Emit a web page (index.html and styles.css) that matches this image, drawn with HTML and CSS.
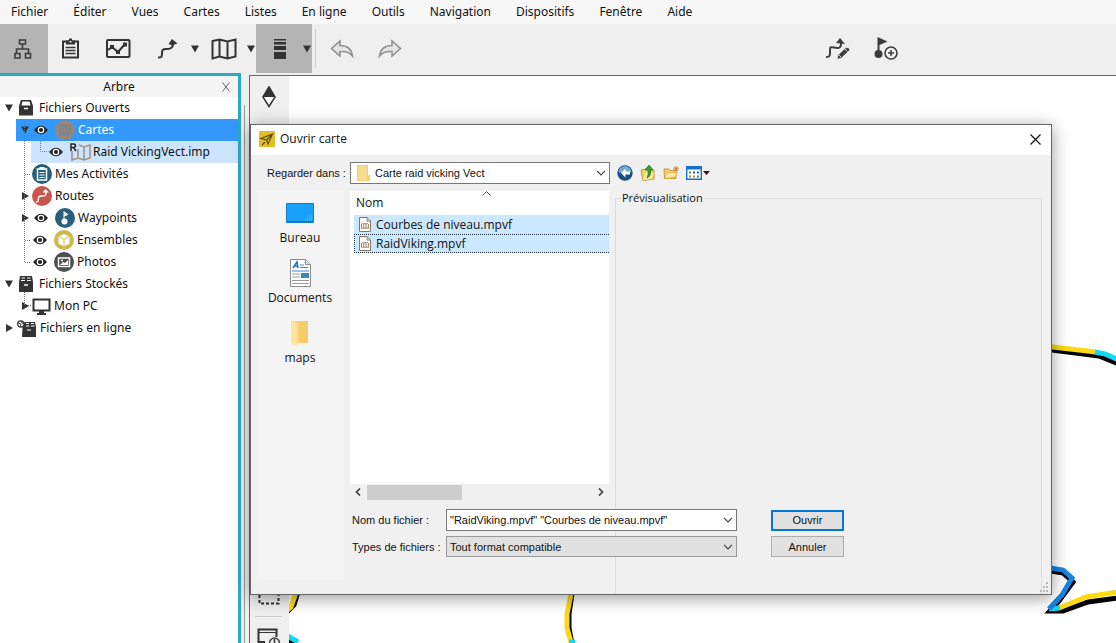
FILE: index.html
```html
<!DOCTYPE html>
<html lang="fr">
<head>
<meta charset="utf-8">
<title>Ouvrir carte</title>
<link rel="stylesheet" href="styles.css">
</head>
<body>
<svg class="defs" aria-hidden="true">
  <symbol id="eye" viewBox="0 0 14 10"><path d="M0 5Q7-3.500 14 5Q7 13.500 0 5Z" fill="#222"/><circle cx="7" cy="5" r="3.300" fill="#fff"/><circle cx="7" cy="5" r="2.100" fill="#222"/></symbol>
  <symbol id="chev" viewBox="0 0 10 6"><path d="M1 .8l4 4 4-4" fill="none" stroke="#444" stroke-width="1.200"/></symbol>
  <symbol id="down" viewBox="0 0 8 8"><path d="M0 .5h8L4 7.500z" fill="#333"/></symbol>
  <symbol id="right" viewBox="0 0 8 8"><path d="M1 0v8l7-4z" fill="#333"/></symbol>
  <symbol id="map" viewBox="0 0 26 22"><path d="M1.500 3l7-1.500 8 2 8-2v17l-8 2-8-2-7 2zM8.500 1.500v17M16.500 3.500v17" fill="none" stroke="currentColor" stroke-width="2"/></symbol>
  <symbol id="route" viewBox="0 0 20 20"><path d="M0 18.500c4 0 4-1 4-4.500s1-4 4-4 7 0 7-5" fill="none" stroke="currentColor" stroke-width="2"/><path d="M10.500 5L14 0l5.500 4.500-3 1-2 1z" fill="currentColor"/></symbol>
  <symbol id="mapfile" viewBox="0 0 12 15"><path d="M.5.500h7.500l3.500 3.500v10.500h-11z" fill="#fff" stroke="#8b7765"/><path d="M8 .5v3.500h3.500" fill="none" stroke="#8b7765"/><path d="M2.500 11.500V7q1.200-1.200 2.300 0v4M4.800 7q1.200-1.200 2.300 0v4M7.100 7q1.200-1.200 2.300 0v4.500M2.500 11.200h7" fill="none" stroke="#94765a" stroke-width=".9"/></symbol>
  <symbol id="folder" viewBox="0 0 18 26"><path d="M2 1h15v22H2z" fill="#f5cc67"/><path d="M0 0l6 3v23l-6-3z" fill="#ffe39a"/><path d="M6 3h2v20H6z" fill="#f9d77e"/></symbol>
  <symbol id="folder-open" viewBox="0 0 13 16"><path d="M0 0h11v10h2v5l-1 1H0z" fill="#f3cd71"/><path d="M1 1h9v14H1z" fill="#fadc8c"/></symbol>
</svg>

<nav class="menubar">
  <button>Fichier</button><button>Éditer</button><button>Vues</button><button>Cartes</button><button>Listes</button><button>En ligne</button><button>Outils</button><button>Navigation</button><button>Dispositifs</button><button>Fenêtre</button><button>Aide</button>
</nav>

<div class="toolbar">
  <button class="tool on" aria-label="Arbre"><svg width="20" height="22" viewBox="0 0 20 22"><path d="M6.500 2h6v4h-6zM2 15.500h5v4.500H2zM12.500 15.500h5v4.500h-5zM9.500 6v5M3.500 15v-4h12v4" fill="none" stroke="#3c3c3c" stroke-width="1.600"/></svg></button>
  <button class="tool" aria-label="Listes"><svg width="20" height="22" viewBox="0 0 20 22"><path d="M2 3.500h15v16H2z" fill="none" stroke="#333" stroke-width="2"/><path d="M5 2.500h3V.5h3v2h3v4H5z" fill="#333"/><path d="M8.500 3h2v1.500h-2z" fill="#efefef"/><path d="M4.500 9.500h10M4.500 12.500h10M4.500 15.500h10" stroke="#333" stroke-width="1.500"/></svg></button>
  <button class="tool" aria-label="Graphiques"><svg width="26" height="20" viewBox="0 0 26 20"><rect x="1" y="1" width="22.500" height="17" rx="1" fill="none" stroke="#333" stroke-width="2"/><path d="M2 11l4-3 6 5 7-8" fill="none" stroke="#333" stroke-width="2"/><path d="M4 6h4v4H4zM10 11h4v4h-4zM17 3.500h4v4h-4z" fill="#333"/></svg></button>
  <button class="tool split" aria-label="Routes"><span><svg width="20" height="20"><use href="#route"/></svg></span><svg width="8" height="8"><use href="#down"/></svg></button>
  <button class="tool split" aria-label="Cartes"><span><svg width="26" height="22"><use href="#map"/></svg></span><svg width="8" height="8"><use href="#down"/></svg></button>
  <button class="tool split on" aria-label="Affichage"><span><svg width="12" height="22" viewBox="0 0 12 22"><path d="M0 1h12v1.500H0zM0 4h12v2.500H0zM0 8h12v4H0zM0 14h12v7H0z" fill="#333"/></svg></span><svg width="8" height="8"><use href="#down"/></svg></button>
  <span class="rule"></span>
  <button class="tool" aria-label="Annuler l'action"><svg width="24" height="20" viewBox="0 0 24 20"><path d="M10 2v4.500c7 0 11.500 3 12.500 10.500-3-4-7-5-12.500-4.500v4.500L1.500 9.500z" fill="#e4e4e4" stroke="#8e8e8e" stroke-width="1.500"/></svg></button>
  <button class="tool" aria-label="Rétablir"><svg width="24" height="20" viewBox="0 0 24 20"><path d="M14 2v4.500C7 6.500 2.500 9.500 1.500 17c3-4 7-5 12.500-4.500v4.500l8.500-7.500z" fill="#e4e4e4" stroke="#8e8e8e" stroke-width="1.500"/></svg></button>
  <div class="tools-end">
    <button class="tool" aria-label="Modifier la route"><svg width="26" height="22" viewBox="0 0 26 22"><path d="M1 19c4 0 4-1 4-5 0-6 0-5 4-4.500 5 1 7 1 7-4.500" fill="none" stroke="#3c3c3c" stroke-width="2"/><path d="M11 5l4-5 5 6z" fill="#3c3c3c"/><path d="M12 21.500l1-4.500 8-7.500q3-1 4 2.500L16.500 20z" fill="#3c3c3c" stroke="#efefef" stroke-width=".8"/><path d="M14 17l2 2M20 11l2.500 2.500" stroke="#ddd"/></svg></button>
    <button class="tool" aria-label="Ajouter un waypoint"><svg width="24" height="23" viewBox="0 0 24 23"><circle cx="4.500" cy="17" r="4" fill="#3c3c3c"/><path d="M3.500 1v16h2V8l8-3.500L3.500 0z" fill="#3c3c3c"/><circle cx="17" cy="16" r="6" fill="#eee" stroke="#3c3c3c" stroke-width="1.600"/><path d="M17 13v6M14 16h6" stroke="#3c3c3c" stroke-width="1.500"/></svg></button>
  </div>
</div>

<div class="workspace">
  <aside class="tree">
    <header><h2>Arbre</h2><button aria-label="Fermer l'arbre"><svg width="8" height="10" viewBox="0 0 8 10"><path d="M.5.500l7 9M7.500.500l-7 9" stroke="#666"/></svg></button></header>
    <div class="nodes">
      <svg class="lines" width="60" height="242" viewBox="0 0 60 242"><path d="M24.500 22v143.500M25 77.500h6M25 143.500h5M25 165.500h5M24.500 195v13M28 208.500h4M40.500 44v10.500h8" fill="none" stroke="#777" stroke-dasharray="1 1"/></svg>
      <div class="node l0"><svg width="8" height="8"><use href="#down"/></svg><svg width="14" height="16" viewBox="0 0 14 16"><path d="M2 0h10l2 6v9.500H0V6z" fill="#333"/><path d="M3.500 1.500h7l1 4h-9z" fill="#fff"/><path d="M5 8.500h4" stroke="#fff" stroke-width="1.500"/></svg><span>Fichiers Ouverts</span></div>
      <div class="node l1 picked"><svg width="8" height="8"><use href="#down"/></svg><svg width="14" height="10"><use href="#eye"/></svg><svg class="badge" width="20" height="20" viewBox="0 0 20 20"><circle cx="10" cy="10" r="9.800" fill="#9a8674"/><path d="M5 6l3-1 4 1 3-1v9l-3 1-4-1-3 1zM8 5v9M12 6v9" fill="none" stroke="#6f8398" stroke-width="1.300"/></svg><span>Cartes</span></div>
      <div class="node l2 child"><svg width="14" height="10"><use href="#eye"/></svg><svg class="raid" width="21" height="18" viewBox="0 0 21 18"><path d="M2 8v9l6-2 6 2 6-2V2l-6 2-5-2M8 6v9M14 4v13" fill="none" stroke="#a19384" stroke-width="1.600"/><path d="M1 8V1h2.500q2 0 2 1.700T3.500 4.500H1M3.500 4.500L6 8" fill="none" stroke="#222" stroke-width="1.500"/></svg><span>Raid VickingVect.imp</span></div>
      <div class="node l1b"><svg width="20" height="20" viewBox="0 0 20 20"><circle cx="10" cy="10" r="10" fill="#24607a"/><path d="M5.500 5h9v11h-9z" fill="none" stroke="#fff" stroke-width="1.500"/><path d="M7.500 3h5v3h-5z" fill="#fff"/><path d="M7.500 8.500h5M7.500 11h5M7.500 13.500h5" stroke="#fff" stroke-width="1.200"/></svg><span>Mes Activités</span></div>
      <div class="node l1"><svg width="8" height="8"><use href="#right"/></svg><svg class="tight" width="20" height="20" viewBox="0 0 20 20"><circle cx="10" cy="10" r="10" fill="#c8564c"/><path d="M4 16c3 0 2-1 2.500-4s2-2 4-2 3.500 0 3.500-4" fill="none" stroke="#fff" stroke-width="1.500"/><path d="M10.500 6.500L13.500 3l3.500 3.500z" fill="#fff"/></svg><span>Routes</span></div>
      <div class="node l1"><svg width="8" height="8"><use href="#right"/></svg><svg width="14" height="10"><use href="#eye"/></svg><svg class="badge" width="20" height="20" viewBox="0 0 20 20"><circle cx="10" cy="10" r="10" fill="#285f7c"/><circle cx="9.500" cy="13.500" r="3" fill="#fff"/><path d="M8.500 3l5 3.500-4 2V13h-1z" fill="#fff"/></svg><span>Waypoints</span></div>
      <div class="node l1c"><svg width="14" height="10"><use href="#eye"/></svg><svg class="badge" width="20" height="20" viewBox="0 0 20 20"><circle cx="10" cy="10" r="10" fill="#cdba4e"/><path d="M10 4l5.500 2.500v7L10 16.500l-5.500-3v-7z" fill="#fff"/><path d="M4.500 6.500L10 9.500l5.500-3M10 9.500v7" fill="none" stroke="#cdba4e"/></svg><span>Ensembles</span></div>
      <div class="node l1c"><svg width="14" height="10"><use href="#eye"/></svg><svg class="badge" width="20" height="20" viewBox="0 0 20 20"><circle cx="10" cy="10" r="10" fill="#4d4e50"/><path d="M4.500 6h11v8.500h-11z" fill="none" stroke="#fff" stroke-width="1.500"/><path d="M6 13l3-3 2 1 3-3v5z" fill="#fff"/><circle cx="8" cy="8.500" r="1" fill="#fff"/></svg><span>Photos</span></div>
      <div class="node l0"><svg width="8" height="8"><use href="#down"/></svg><svg width="14" height="16" viewBox="0 0 14 16"><path d="M1 0h12l1 6v10H0V6z" fill="#333"/><path d="M2.500 1.500h3.500v1H2.500zM8 1.500h3.500v1H8zM2 4h4v1H2zM8 4h4v1H8z" fill="#fff"/><path d="M5 9h4" stroke="#fff" stroke-width="1.500"/></svg><span>Fichiers Stockés</span></div>
      <div class="node l1"><svg width="8" height="8"><use href="#right"/></svg><svg class="tight" width="19" height="17" viewBox="0 0 19 17"><path d="M1.500 1.500h16v11h-16z" fill="none" stroke="#333" stroke-width="2"/><path d="M7 13h5v2h2v2H5v-2h2z" fill="#333"/></svg><span>Mon PC</span></div>
      <div class="node l0"><svg width="8" height="8"><use href="#right"/></svg><svg class="online" width="19" height="17" viewBox="0 0 19 17"><path d="M5.500 7l2-5H18l1 5v10H5z" fill="#333"/><path d="M9 3.500h3M14 3.500h3M9 6h3.500M14 6h3.500M10 10h4" stroke="#fff" stroke-width="1.200"/><circle cx="3.800" cy="4" r="3.200" fill="#fff" stroke="#333" stroke-width="1.200"/><path d="M1 3l3 1-1 3M4 1l1 2 2 1" fill="none" stroke="#333"/></svg><span>Fichiers en ligne</span></div>
    </div>
  </aside>
  <div class="splitter"><i></i></div>
  <main class="mapview">
    <div class="maptools">
      <button aria-label="Nord"><svg width="14" height="22" viewBox="0 0 14 22"><path d="M1 11L7 1l6 10L7 20.500z" fill="#fff" stroke="#333" stroke-width="1.500"/><path d="M.5 11L7 0l6.500 11z" fill="#333"/></svg></button>
      <div class="lower">
        <button aria-label="Sélection"><svg width="22" height="16" viewBox="0 0 22 16"><path d="M1.500 1v13.500h19V1" fill="none" stroke="#333" stroke-width="2" stroke-dasharray="3 2"/></svg></button>
        <hr>
        <button aria-label="Zoom"><svg width="24" height="15" viewBox="0 0 24 15"><path d="M8 14H1.500V1.500h18V9" fill="none" stroke="#333" stroke-width="2"/><path d="M2 4.500h17" stroke="#333"/><circle cx="17.500" cy="15" r="5" fill="#eee" stroke="#444" stroke-width="1.500"/><path d="M17.500 11v4" stroke="#333" stroke-width="1.500"/></svg></button>
      </div>
    </div>
    <svg class="tracks" viewBox="0 0 827 567" width="827" height="567" fill="none" stroke-width="5">
      <g stroke="#000"><path d="M755 273l55 7 20 8M755 494l19 3 10 9-14 19-9 10h13l25-9 30-4M9 516l-4 13-9 9M283 518l-3 20v14l3 16M-3 563l10 6"/></g>
      <path d="M755 270l52 6M770 532l27-11 32-5M8 514l-6 17-6 5M282 518l-4 20v14l4 14" stroke="#fbda10"/>
      <path d="M806 276l10 2 14 6M760 533l11-1M-3 559l12 7M280 566h6" stroke="#13d8f2"/>
      <path d="M755 491l19 3 9 8-10 17-13 14" stroke="#1684e0"/>
    </svg>
  </main>
</div>

<section class="dialog" role="dialog" aria-labelledby="dlg-title">
  <header class="titlebar">
    <svg width="16" height="16" viewBox="0 0 16 16"><rect width="16" height="16" rx="1" fill="#dfbf25"/><path d="M2 7.500L13.500 3 9 13 7.500 9zM7.500 9l6-6M3 14l3-3" fill="none" stroke="#5d4b12" stroke-width="1.200"/></svg>
    <h1 id="dlg-title">Ouvrir carte</h1>
    <button aria-label="Fermer"><svg width="11" height="11" viewBox="0 0 11 11"><path d="M.5.500l10 10M10.500.500l-10 10" stroke="#111" stroke-width="1.200"/></svg></button>
  </header>
  <div class="body">
    <div class="lookin">
      <label for="lookin">Regarder dans :</label>
      <span class="combo"><svg class="pic" width="13" height="16"><use href="#folder-open"/></svg><select id="lookin"><option>Carte raid vicking Vect</option></select><svg class="chev" width="10" height="6"><use href="#chev"/></svg></span>
      <button aria-label="Précédent"><svg width="16" height="16" viewBox="0 0 16 16"><circle cx="8" cy="8" r="7.700" fill="#174f85"/><path d="M1.500 7a6.500 6 0 0 1 13 0q-6 3-13 0z" fill="#78a7cf"/><path d="M8.500 3.500L4 8l4.500 4.500V9.500H13v-3H8.500z" fill="#fff"/></svg></button>
      <button aria-label="Dossier parent"><svg width="16" height="16" viewBox="0 0 16 16"><path d="M1 5l5-1 1 1h7v9l-11 1.500z" fill="#f2d56b" stroke="#c49a34"/><path d="M3 15l2-7h9l-2 6z" fill="#ffeb9b"/><path d="M9 0l4 5h-2.500q1 6-3.500 8 2-4 1-8H5z" fill="#35a52d" stroke="#1b711a" stroke-width=".7"/></svg></button>
      <button aria-label="Nouveau dossier"><svg width="16" height="16" viewBox="0 0 16 16"><path d="M1 4h5l1 1.500h6v8H1.500z" fill="#f4d06a" stroke="#c99b3a"/><path d="M2 13.500l2-6h10l-2 5z" fill="#ffe99d" stroke="#d5a94a" stroke-width=".7"/><path d="M13 1v6M10 4h6M11 2l4 4M15 2l-4 4" stroke="#d97a37"/></svg></button>
      <button class="views" aria-label="Affichage"><svg width="16" height="14" viewBox="0 0 16 14"><path d="M.7.700h14.600v12.600H.7z" fill="#fff" stroke="#1272c4" stroke-width="1.400"/><path d="M0 0h16v3.500H0z" fill="#1272c4"/><path d="M3 5.500h2v2H3zM11 9.500h2v2h-2z" fill="#548b68"/><path d="M7 5.500h2v2H7zM11 5.500h2v2h-2z" fill="#235c99"/><path d="M3 9.500h2v2H3zM7 9.500h2v2H7z" fill="#b18745"/></svg><svg width="7" height="4" viewBox="0 0 7 4"><path d="M0 0h7L3.500 4z" fill="#311"/></svg></button>
    </div>
    <div class="places">
      <button><span><svg width="28" height="20" viewBox="0 0 28 20"><path d="M.5.500h27v19H.5z" fill="#18a1fb" stroke="#1680c6"/><path d="M1 18.500h26" stroke="#1670b0"/><path d="M19 17h7M21 15h5M23 13h3" stroke="#7cc8f8" stroke-dasharray="1 1"/></svg></span>Bureau</button>
      <button><span><svg width="21" height="28" viewBox="0 0 21 28"><path d="M.5.500h15l5 5v22H.5z" fill="#fff" stroke="#8d8d8d"/><path d="M15.500.500v5h5" fill="#ddd" stroke="#8d8d8d"/><path d="M3 9l4-6 1 6M5 7h3" fill="none" stroke="#1976c5" stroke-width="1.500"/><path d="M10 6h4M10 8.500h8M2 12h17" stroke="#348bd2"/><path d="M2 15h8M2 18h8M2 21.500h17M2 24.500h17" stroke="#999"/><path d="M11 14h8v5h-8z" fill="#3c83b6"/></svg></span>Documents</button>
      <button><span><svg width="18" height="26" viewBox="0 0 18 26"><use href="#folder"/></svg></span>maps</button>
    </div>
    <div class="files">
      <div class="list">
        <svg class="sort" width="9" height="5" viewBox="0 0 9 5"><path d="M.5 4.500l4-4 4 4" fill="none" stroke="#555"/></svg>
        <div class="colhead">Nom</div>
        <div class="file"><svg width="12" height="15"><use href="#mapfile"/></svg>Courbes de niveau.mpvf</div>
        <div class="file focus"><svg width="12" height="15"><use href="#mapfile"/></svg>RaidViking.mpvf</div>
      </div>
      <div class="scroll"><svg width="6" height="8" viewBox="0 0 6 8"><path d="M5 .5L1.500 4 5 7.500" fill="none" stroke="#444" stroke-width="1.700"/></svg><i></i><svg width="6" height="8" viewBox="0 0 6 8"><path d="M1 .5L4.500 4 1 7.500" fill="none" stroke="#444" stroke-width="1.700"/></svg></div>
    </div>
    <fieldset class="preview"><legend>Prévisualisation</legend></fieldset>
    <div class="form">
      <label for="fname">Nom du fichier :</label>
      <span class="combo"><input id="fname" type="text" value="&quot;RaidViking.mpvf&quot; &quot;Courbes de niveau.mpvf&quot;"><svg class="chev" width="10" height="6"><use href="#chev"/></svg></span>
      <button class="btn main">Ouvrir</button>
      <label for="ftype">Types de fichiers :</label>
      <span class="combo grey"><select id="ftype"><option>Tout format compatible</option></select><svg class="chev" width="10" height="6"><use href="#chev"/></svg></span>
      <button class="btn">Annuler</button>
    </div>
    <svg class="grip" width="10" height="10" viewBox="0 0 10 10"><path d="M7 0h2v2H7zM4 4h2v2H4zM7 4h2v2H7zM1 8h2v2H1zM4 8h2v2H4zM7 8h2v2H7z" fill="#bbb"/></svg>
  </div>
</section>
</body>
</html>
```
FILE: styles.css
```css
* { box-sizing: border-box; }
body {
  margin: 0;
  height: 100vh;
  overflow: hidden;
  position: relative;
  display: flex;
  flex-direction: column;
  background: #f0f0f0;
  color: #111;
  font: 12px/16px "Noto Sans", sans-serif;
}
.defs { position: absolute; width: 0; height: 0; }
svg { display: block; flex: none; }
button { border: 0; padding: 0; margin: 0; background: none; font: inherit; color: inherit; }
h1, h2 { margin: 0; font-size: 12px; font-weight: normal; }

.menubar { display: flex; gap: 25px; height: 24px; padding: 0 11px; background: #f7f7f7; }
.toolbar { display: flex; height: 49px; background: #efefef; color: #333; }
.tool { width: 48px; display: flex; align-items: center; justify-content: center; padding-right: 2px; }
.tool.split { width: 56px; justify-content: flex-start; padding: 0; }
.tool.split span { width: 47px; display: flex; justify-content: center; }
.tool.on { background: #b4b4b4; }
.rule { width: 1px; margin: 5px 3px; background: #ccc; }
.tools-end { display: flex; margin-left: auto; margin-right: 205px; }

.workspace { flex: 1; display: flex; min-height: 0; }
.tree { width: 241px; background: #fff; border-top: 3px solid #2aabca; border-right: 3px solid #2aabca; }
.tree header { height: 21px; display: flex; align-items: center; background: #f4f4f4; padding-right: 8px; }
.tree h2 { flex: 1; text-align: center; padding-left: 16px; }
.nodes { position: relative; }
.lines { position: absolute; left: 0; top: 0; z-index: 1; }
.node { height: 22px; display: flex; align-items: center; gap: 5px; white-space: nowrap; }
.l0 { padding-left: 5px; gap: 6px; }
.l1 { margin-left: 16px; padding-left: 5px; }
.l1b { padding-left: 32px; gap: 3px; }
.l1c { padding-left: 33px; }
.l2 { margin-left: 31px; padding-left: 18px; }
.picked { background: #3399ff; color: #fff; }
.child { background: #cce4fd; }
.node .badge { margin: 0 -2px 0 2px; }
.node .tight { margin: 0 -2px; }
.node .raid { margin: 0 -3px 0 2px; }
.node .online { margin: 0 -2px; }

.splitter { width: 8px; padding: 32px 3px 0; }
.splitter i { display: block; width: 1px; height: 100%; background: #999; }
.mapview { flex: 1; display: flex; margin-top: 2px; border: solid #666; border-width: 1px 0 0 1px; background: #fff; min-width: 0; overflow: hidden; }
.maptools { width: 39px; flex: none; display: flex; flex-direction: column; justify-content: space-between; align-items: center; padding: 10px 2px 0 0; background: #efefef; }
.lower { display: flex; flex-direction: column; align-items: center; gap: 11px; }
.lower hr { width: 27px; height: 1px; border: 0; margin: 0; background: #ccc; }
.tracks { flex: none; }

.dialog { position: absolute; left: 250px; right: 64px; top: 124px; border: 1px solid #666; background: #f0f0f0; box-shadow: 0 3px 16px rgba(0, 0, 0, .4); font-family: "Open Sans", sans-serif; }
.titlebar { height: 30px; display: flex; align-items: center; gap: 5px; padding: 0 10px 2px 8px; background: #fff; }
.titlebar h1 { flex: 1; }
.body { position: relative; display: grid; grid-template-columns: 86px 259px 1fr; grid-template-rows: 22px 309px 87px; column-gap: 6px; row-gap: 7px; padding: 7px 9px 0 7px; }
.lookin, .form { font-family: "Liberation Sans", Arial, sans-serif; font-size: 11px; }
.lookin { grid-column: 1 / 4; display: flex; align-items: center; gap: 7px; padding-left: 9px; }
.lookin label { width: 76px; white-space: nowrap; }
.lookin .combo { width: 260px; }
.combo { position: relative; display: flex; height: 22px; }
.combo select, .combo input { appearance: none; width: 100%; border: 1px solid #777; border-radius: 0; background: #fff; padding: 0 20px 0 3px; margin: 0; font: inherit; color: #111; }
.combo .pic { position: absolute; left: 7px; top: 3px; }
.combo .pic ~ select { padding-left: 24px; }
.combo .chev { position: absolute; right: 4px; top: 8px; pointer-events: none; }
.combo.grey { height: 21px; }
.combo.grey select { background: #e1e1e1; border-color: #999; }
.views { display: flex; align-items: center; gap: 1px; }
.places { grid-column: 1; grid-row: 2 / 4; margin-bottom: 14px; background: #f4f4f4; display: flex; flex-direction: column; padding-top: 7px; }
.places button { height: 60px; display: flex; flex-direction: column; align-items: center; padding-right: 2px; }
.places span { height: 32px; display: flex; align-items: center; padding-bottom: 2px; }
.files { grid-column: 2; grid-row: 2; display: flex; flex-direction: column; }
.list { flex: 1; position: relative; background: #fff; padding-left: 4px; }
.sort { position: absolute; left: 132px; top: 0; }
.colhead { height: 24px; padding: 4px 2px; }
.file { height: 19px; display: flex; align-items: center; gap: 5px; padding-left: 4px; border: 1px solid #cce8ff; background: #cce8ff; }
.file.focus { border: 1px dotted #234; border-right: 0; }
.scroll { height: 16px; display: flex; align-items: center; padding: 0 5px; gap: 6px; }
.scroll i { width: 95px; height: 15px; background: #cdcdcd; margin-right: auto; }
.preview { grid-column: 3; grid-row: 2 / 4; margin: 0; padding: 0 5px; border: 1px solid #dcdcdc; border-bottom: 0; min-width: 0; font-size: 11px; line-height: 14px; }
.preview legend { padding: 0 1px; }
.form { grid-column: 2 / 4; grid-row: 3; z-index: 1; display: grid; grid-template-columns: 94px 291px 34px 73px; row-gap: 5px; align-content: start; align-items: center; padding: 2px 0 0 2px; }
.btn { grid-column: 4; height: 21px; border: 1px solid #adadad; background: #e1e1e1; }
.btn.main { border: 2px solid #0078d7; }
.grip { position: absolute; right: 2px; bottom: 2px; }
```
